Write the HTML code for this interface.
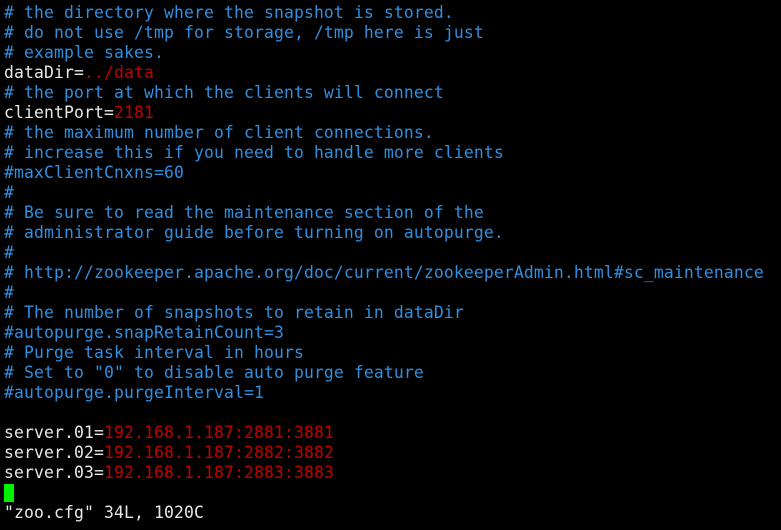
<!DOCTYPE html>
<html><head><style>
html,body{margin:0;padding:0;background:#000;width:781px;height:530px;overflow:hidden}
pre{margin:0;position:absolute;left:4px;top:3px;font-family:"DejaVu Sans Mono","Liberation Mono",monospace;font-size:16.4px;letter-spacing:0.13px;line-height:20px;color:#e8e8e8}
.c{color:#2f8fe0}.r{color:#c00000}
.cur{display:inline-block;width:10px;height:18px;background:#00f000;vertical-align:-4px}
</style></head><body><pre><span class="c"># the directory where the snapshot is stored.
# do not use /tmp for storage, /tmp here is just
# example sakes.</span>
dataDir=<span class="r">../data</span>
<span class="c"># the port at which the clients will connect</span>
clientPort=<span class="r">2181</span>
<span class="c"># the maximum number of client connections.
# increase this if you need to handle more clients
#maxClientCnxns=60
#
# Be sure to read the maintenance section of the
# administrator guide before turning on autopurge.
#
# http://zookeeper.apache.org/doc/current/zookeeperAdmin.html#sc_maintenance
#
# The number of snapshots to retain in dataDir
#autopurge.snapRetainCount=3
# Purge task interval in hours
# Set to "0" to disable auto purge feature
#autopurge.purgeInterval=1</span>

server.01=<span class="r">192.168.1.187:2881:3881</span>
server.02=<span class="r">192.168.1.187:2882:3882</span>
server.03=<span class="r">192.168.1.187:2883:3883</span>
<span class="cur"></span>
"zoo.cfg" 34L, 1020C</pre></body></html>
